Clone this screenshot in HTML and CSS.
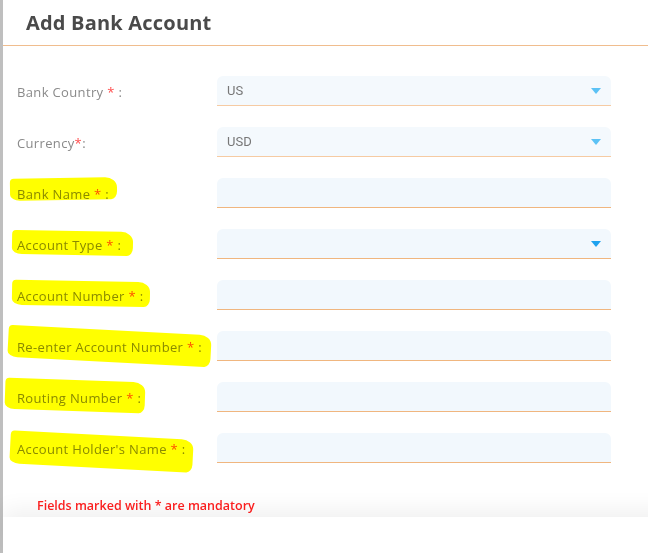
FILE: index.html
```html
<!DOCTYPE html>
<html lang="en">
<head>
    <meta charset="UTF-8">
    <meta name="viewport" content="width=device-width, initial-scale=1.0">
    <title>Add Bank Account</title>
    <link rel="stylesheet" href="styles.css">
</head>
<body>
    <div class="modal">
        <div class="modal-header">
            <h2 class="modal-title">Add Bank Account</h2>
        </div>
        <div class="modal-body">
            <form class="bank-form">
                <div class="form-row">
                    <label class="form-label"><span class="label-text">Bank Country <span class="req">*</span> :</span></label>
                    <div class="field field-disabled">
                        <span class="field-value">US</span>
                        <span class="caret"></span>
                    </div>
                </div>
                <div class="form-row">
                    <label class="form-label"><span class="label-text">Currency<span class="req">*</span>:</span></label>
                    <div class="field field-disabled">
                        <span class="field-value">USD</span>
                        <span class="caret"></span>
                    </div>
                </div>
                <div class="form-row">
                    <label class="form-label"><span class="label-text mark mark-1">Bank Name <span class="req">*</span> :</span></label>
                    <div class="field"></div>
                </div>
                <div class="form-row">
                    <label class="form-label"><span class="label-text mark mark-2">Account Type <span class="req">*</span> :</span></label>
                    <div class="field">
                        <span class="field-value"></span>
                        <span class="caret caret-active"></span>
                    </div>
                </div>
                <div class="form-row">
                    <label class="form-label"><span class="label-text mark mark-3">Account Number <span class="req">*</span> :</span></label>
                    <div class="field"></div>
                </div>
                <div class="form-row">
                    <label class="form-label"><span class="label-text mark mark-4">Re-enter Account Number <span class="req">*</span> :</span></label>
                    <div class="field"></div>
                </div>
                <div class="form-row">
                    <label class="form-label"><span class="label-text mark mark-5">Routing Number <span class="req">*</span> :</span></label>
                    <div class="field"></div>
                </div>
                <div class="form-row">
                    <label class="form-label"><span class="label-text mark mark-6">Account Holder's Name <span class="req">*</span> :</span></label>
                    <div class="field"></div>
                </div>
            </form>
            <p class="mandatory-note">Fields marked with * are mandatory</p>
        </div>
        <div class="modal-footer"></div>
    </div>
</body>
</html>
```

FILE: styles.css
```css
html, body {
    margin: 0;
    padding: 0;
    height: 100%;
    overflow: hidden;
}
body {
    background-color: #bfbfbf;
    font-family: 'Open Sans', 'Noto Sans', sans-serif;
}
.modal {
    margin-left: 3px;
    width: 700px;
    height: 100%;
    background-color: white;
    display: flex;
    flex-direction: column;
}
.modal-header {
    height: 45px;
    border-bottom: 1px solid #f0bd8e;
    display: flex;
    align-items: center;
    padding-left: 23px;
}
.modal-title {
    margin: 0;
    font-size: 20px;
    font-weight: 700;
    letter-spacing: 0.2px;
    color: #4a4a4a;
}
.modal-body {
    height: 471px;
    padding: 30px 0 0 14px;
    box-sizing: border-box;
}
.bank-form {
    display: flex;
    flex-direction: column;
    gap: 21px;
}
.form-row {
    display: flex;
    align-items: center;
}
.form-label {
    width: 200px;
    font-size: 13px;
    letter-spacing: 0.35px;
    color: #8a8a8a;
}
.label-text {
    position: relative;
    display: inline-block;
    line-height: 20px;
    top: 1px;
}
.req {
    color: #ff4d4d;
}
.field {
    width: 374px;
    height: 29px;
    padding: 0 10px;
    background-color: #f2f8fd;
    border-bottom: 1px solid #f0b67f;
    border-radius: 6px 6px 0 0;
    display: flex;
    align-items: center;
    justify-content: space-between;
}
.field-disabled {
    background-color: #f4f9fd;
    border-bottom-color: #f6cba3;
}
.field-value {
    font-family: 'Roboto', 'Liberation Sans', sans-serif;
    font-size: 13px;
    color: #777777;
}
.caret {
    width: 0;
    height: 0;
    border-left: 5px solid transparent;
    border-right: 5px solid transparent;
    border-top: 6px solid #5cc2f5;
}
.caret-active {
    border-top-color: #1ea2ef;
}
.mandatory-note {
    margin: 34px 0 0 20px;
    font-size: 12.5px;
    font-weight: 600;
    color: #ff1f1f;
}
.modal-footer {
    flex: 1;
    background-color: white;
    box-shadow: 0 -8px 22px rgba(0, 0, 0, 0.06);
    position: relative;
}

/* yellow marker strokes over some labels */
.mark::after {
    content: '';
    position: absolute;
    background-color: #ffff00;
    mix-blend-mode: multiply;
    border-radius: 4px 12px 6px 10px / 4px 10px 8px 6px;
}
.mark-1::after { left: -7px; top: -6px; width: 107px; height: 22px; transform: rotate(-1deg); }
.mark-2::after { left: -5px; top: -4px; width: 121px; height: 24px; transform: rotate(1deg); }
.mark-3::after { left: -5px; top: -5px; width: 138px; height: 25px; transform: rotate(1deg); }
.mark-4::after { left: -9px; top: -7px; width: 203px; height: 32px; transform: rotate(3deg); }
.mark-5::after { left: -12px; top: -8px; width: 140px; height: 31px; transform: rotate(2deg); }
.mark-6::after { left: -7px; top: -4px; width: 183px; height: 33px; transform: rotate(3deg); }
```
